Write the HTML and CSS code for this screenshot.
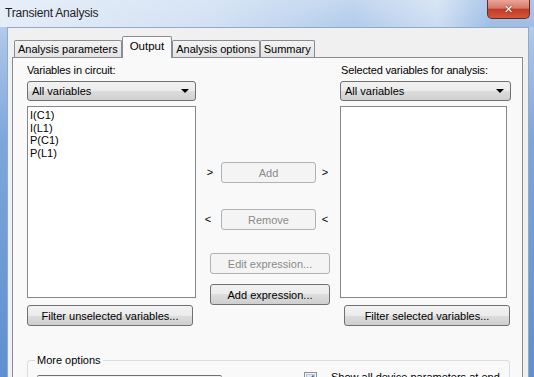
FILE: index.html
```html
<!DOCTYPE html>
<html lang="en">
<head>
    <meta charset="UTF-8">
    <title>Transient Analysis</title>
    <link rel="stylesheet" href="styles.css">
</head>
<body>
    <div class="window">
        <div class="titlebar">
            <span class="title">Transient Analysis</span>
            <button class="close" aria-label="Close">&#x2715;</button>
        </div>

        <div class="client">
            <div class="tabs">
                <div class="tab">Analysis parameters</div>
                <div class="tab active">Output</div>
                <div class="tab">Analysis options</div>
                <div class="tab">Summary</div>
            </div>

            <div class="panel">
                <div class="columns">
                    <!-- Variables del circuito -->
                    <div class="col">
                        <div class="label">Variables in circuit:</div>
                        <div class="combo">All variables<span class="arrow"></span></div>
                        <ul class="list">
                            <li>I(C1)</li>
                            <li>I(L1)</li>
                            <li>P(C1)</li>
                            <li>P(L1)</li>
                        </ul>
                        <button class="btn filter">Filter unselected variables...</button>
                    </div>

                    <div class="col middle">
                        <div class="move-row">
                            <span class="mark">&gt;</span>
                            <button class="btn move" disabled>Add</button>
                            <span class="mark">&gt;</span>
                        </div>
                        <div class="move-row remove">
                            <span class="mark">&lt;</span>
                            <button class="btn move" disabled>Remove</button>
                            <span class="mark">&lt;</span>
                        </div>
                        <button class="btn expr edit" disabled>Edit expression...</button>
                        <button class="btn expr add">Add expression...</button>
                    </div>

                    <!-- Variables seleccionadas -->
                    <div class="col right">
                        <div class="label">Selected variables for analysis:</div>
                        <div class="combo wide">All variables<span class="arrow"></span></div>
                        <ul class="list"></ul>
                        <button class="btn filter small">Filter selected variables...</button>
                    </div>
                </div>

                <fieldset class="group">
                    <legend>More options</legend>
                    <div class="group-row">
                        <div class="field"></div>
                        <span class="check">
                            <svg width="13" height="13" viewBox="0 0 13 13">
                                <rect x="0.5" y="0.5" width="12" height="12" fill="#f4f4f4" stroke="#8e8f8f"/>
                                <rect x="2.5" y="2.5" width="8" height="8" fill="#dfe6f2" stroke="#b9c4d8"/>
                                <path d="M3.5 6.5 L5.5 8.5 L9.5 3.5" fill="none" stroke="#4a5f97" stroke-width="1.6"/>
                            </svg>
                        </span>
                        <span class="check-label">Show all device parameters at end of simulation</span>
                    </div>
                </fieldset>
            </div>
        </div>
    </div>
</body>
</html>
```

FILE: styles.css
```css
body {
    margin: 0;
    padding: 0;
    font-family: 'Liberation Sans', Arial, sans-serif;
    font-size: 11px;
    color: #000;
    width: 534px;
    height: 377px;
    overflow: hidden;
}

.window {
    display: flex;
    flex-direction: column;
    width: 534px;
    height: 377px;
    overflow: hidden;
    background: linear-gradient(to bottom, #c9dbf0 0, #a9c5e8 40px, #7ea6da 140px, #5f8fd0 377px);
}

.titlebar {
    display: flex;
    align-items: flex-start;
    height: 27px;
    flex-shrink: 0;
    background: linear-gradient(to right, rgba(236, 242, 250, 0.85) 0, rgba(222, 233, 246, 0.7) 40%, rgba(170, 200, 236, 0.2) 66%, rgba(235, 242, 250, 0.45) 82%, rgba(110, 155, 215, 0.3) 92%);
}

.title {
    padding-left: 5px;
    line-height: 27px;
    font-size: 12px;
    letter-spacing: -0.2px;
    color: #1e1e1e;
}

.close {
    margin-left: auto;
    margin-right: 4px;
    width: 43px;
    height: 19px;
    padding: 0;
    border: 1px solid #6a2a22;
    border-top: none;
    border-radius: 0 0 5px 5px;
    background: linear-gradient(to bottom, #eaa597 0, #d8786a 45%, #c23c26 52%, #d0573c 100%);
    color: #fff;
    font-family: 'DejaVu Sans', sans-serif;
    font-size: 11px;
    font-weight: bold;
    line-height: 17px;
    text-shadow: 0 0 2px #5a1a10;
}

.client {
    flex: 1;
    display: flex;
    flex-direction: column;
    margin: 0 5px 0 7px;
    background: #f0f0f0;
    border: 1px solid #93a9c6;
    border-bottom: none;
    min-height: 0;
}

.tabs {
    display: flex;
    align-items: flex-end;
    height: 20px;
    margin-top: 9px;
    padding-left: 6px;
    position: relative;
    z-index: 1;
}

.tab {
    height: 16px;
    line-height: 16px;
    padding: 0 3px;
    border: 1px solid #898c95;
    border-bottom: none;
    border-radius: 2px 2px 0 0;
    background: linear-gradient(to bottom, #f3f3f3, #e3e3e3);
    white-space: nowrap;
}

.tab.active {
    height: 21px;
    line-height: 18px;
    margin-bottom: -1px;
    padding: 0 7px;
    background: #f9f9f9;
    font-size: 11.5px;
}

.panel {
    flex: 1;
    margin: 0 5px 0 4px;
    padding: 5px 0 0 14px;
    border: 1px solid #898c95;
    border-bottom: none;
    background: #f9f9f9;
}

.columns {
    display: grid;
    grid-template-columns: 169px 144px 169px;
}

.col {
    display: flex;
    flex-direction: column;
}

.label {
    line-height: 15px;
    height: 15px;
    letter-spacing: -0.15px;
    white-space: nowrap;
}

.right .label {
    padding-left: 1px;
}

.combo {
    position: relative;
    margin-top: 3px;
    height: 18px;
    line-height: 18px;
    padding-left: 4px;
    border: 1px solid #707070;
    border-radius: 3px;
    background: linear-gradient(to bottom, #f2f2f2 0, #ebebeb 50%, #dddddd 50%, #cfcfcf 100%);
}

.combo.wide {
    width: 165px;
}

.arrow {
    position: absolute;
    right: 6px;
    top: 7px;
    border-left: 4px solid transparent;
    border-right: 4px solid transparent;
    border-top: 4px solid #000;
}

.list {
    list-style: none;
    margin: 5px 0 0 0;
    padding: 2px 0 0 2px;
    height: 188px;
    border: 1px solid #828790;
    background: #fff;
    line-height: 12.5px;
}

.right .list {
    width: 163px;
}

.btn {
    font-family: 'Liberation Sans', Arial, sans-serif;
    font-size: 11px;
    color: #000;
    height: 21px;
    padding: 0;
    border: 1px solid #707070;
    border-radius: 3px;
    background: linear-gradient(to bottom, #f2f2f2 0, #ebebeb 50%, #dddddd 50%, #cfcfcf 100%);
}

.btn:disabled {
    color: #8a8a8a;
    border-color: #adb2b5;
    background: #f4f4f4;
}

.filter {
    margin-top: 7px;
    width: 166px;
}

.filter.small {
    align-self: flex-end;
    width: 166px;
    margin-right: -1px;
}

.middle {
    padding-top: 99px;
}

.move-row {
    display: flex;
    align-items: center;
    padding-left: 10px;
}

.move-row.remove {
    margin-top: 26px;
}

.mark {
    width: 8px;
    text-align: center;
    line-height: 21px;
}

.move {
    width: 95px;
    margin: 0 5px 0 7px;
}

.remove .mark:first-child {
    margin-left: -2px;
    margin-right: 2px;
}

.expr {
    width: 120px;
    margin-left: 14px;
}

.expr.edit {
    margin-top: 23px;
}

.expr.add {
    margin-top: 10px;
}

.group {
    margin: 27px 0 0 0;
    width: 481px;
    padding: 0 0 0 7px;
    border: 1px solid #d5dfe5;
    border-radius: 3px;
    box-sizing: border-box;
}

.group legend {
    padding: 0 2px;
    line-height: 14px;
}

.group-row {
    display: flex;
    align-items: flex-start;
}

.field {
    margin: 8px 0 0 2px;
    width: 183px;
    height: 20px;
    border-top: 1px solid #6f6f6f;
    border-left: 1px solid #9a9a9a;
    border-right: 1px solid #9a9a9a;
    border-radius: 2px 2px 0 0;
    background: linear-gradient(to bottom, #f2f2f2, #e4e4e4);
}

.check {
    display: flex;
    margin: 5px 0 0 82px;
}

.check-label {
    width: 178px;
    margin: 3px 0 0 14px;
    line-height: 15px;
}
```
